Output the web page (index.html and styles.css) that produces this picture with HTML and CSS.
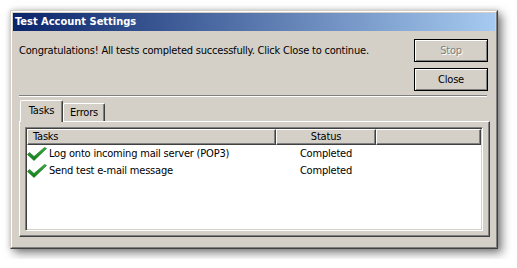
FILE: index.html
```html
<!DOCTYPE html>
<html>
<head>
<meta charset="utf-8">
<link rel="stylesheet" href="styles.css">
</head>
<body>
<div class="window">
  <div class="frame">
    <div class="titlebar">Test Account Settings</div>
    <div class="content">
      <div class="top">
        <div class="msg">Congratulations! All tests completed successfully. Click Close to continue.</div>
        <div class="buttons">
          <div class="btn disabled">Stop</div>
          <div class="btn">Close</div>
        </div>
      </div>
      <div class="sep"></div>
      <div class="tabs">
        <div class="tab active">Tasks</div>
        <div class="tab errors">Errors</div>
      </div>
      <div class="panel">
        <div class="list">
          <div class="header">
            <div class="hcell c1">Tasks</div>
            <div class="hcell c2">Status</div>
            <div class="hcell c3"></div>
          </div>
          <div class="row">
            <div class="cell c1"><svg class="check" width="20" height="14" viewBox="0 0 20 14"><defs><linearGradient id="g" x1="0" y1="0" x2="0" y2="1"><stop offset="0" stop-color="#3cb043"/><stop offset="1" stop-color="#0f7a16"/></linearGradient></defs><polygon points="0.5,7.5 2.5,5.5 7,9.5 17.5,0.5 19.5,1.5 7,13.5" fill="url(#g)" stroke="#0b6a12" stroke-width="0.6"/></svg>Log onto incoming mail server (POP3)</div>
            <div class="cell c2">Completed</div>
          </div>
          <div class="row">
            <div class="cell c1"><svg class="check" width="20" height="14" viewBox="0 0 20 14"><polygon points="0.5,7.5 2.5,5.5 7,9.5 17.5,0.5 19.5,1.5 7,13.5" fill="url(#g)" stroke="#0b6a12" stroke-width="0.6"/></svg>Send test e-mail message</div>
            <div class="cell c2">Completed</div>
          </div>
        </div>
      </div>
    </div>
  </div>
</div>
</body>
</html>
```
FILE: styles.css
```css
* { box-sizing: border-box; }
html, body { margin: 0; padding: 0; background: #fff; }
body {
  padding: 10px;
  font-family: "DejaVu Sans Condensed", "DejaVu Sans", sans-serif;
  font-size: 11px;
  letter-spacing: -0.2px;
  color: #000;
}
.window {
  width: 488px;
  height: 239px;
  background: #D4D0C8;
  border: 1px solid;
  border-color: #D4D0C8 #404040 #404040 #D4D0C8;
  box-shadow: 4px 4px 9px rgba(0,0,0,.5), 0 0 5px rgba(0,0,0,.15);
}
.frame {
  height: 100%;
  border: 1px solid;
  border-color: #fff #808080 #808080 #fff;
  display: flex;
  flex-direction: column;
}
.titlebar {
  margin: 1px 1px 0 1px;
  height: 18px;
  line-height: 18px;
  padding-left: 2px;
  color: #fff;
  font-weight: bold;
  letter-spacing: 0;
  background: linear-gradient(to right, #0A246A, #A6CAF0);
}
.content {
  padding: 0 7px;
}
.top {
  display: flex;
  justify-content: space-between;
  padding-top: 8px;
  padding-right: 1px;
}
.msg {
  padding-top: 5px;
  line-height: 13px;
}
.buttons {
  display: flex;
  flex-direction: column;
  gap: 6px;
}
.btn {
  width: 74px;
  height: 23px;
  line-height: 21px;
  text-align: center;
  border: 1px solid #000;
  box-shadow: inset 1px 1px #fff, inset -1px -1px #808080;
  background: #D4D0C8;
}
.btn.disabled {
  color: #808080;
  text-shadow: 1px 1px #fff;
}
.sep {
  margin-top: 4px;
  height: 2px;
  border-top: 1px solid #808080;
  border-bottom: 1px solid #fff;
  margin-right: 2px;
}
.tabs {
  margin-top: 3px;
  height: 21px;
  display: flex;
  align-items: flex-end;
  padding-left: 1px;
}
.tab {
  height: 18px;
  line-height: 17px;
  text-align: center;
  border-top: 1px solid #fff;
  border-left: 1px solid #fff;
  border-right: 1px solid #404040;
  border-radius: 2px 2px 0 0;
  box-shadow: inset -1px 0 #808080;
  background: #D4D0C8;
}
.tab.errors { width: 42px; }
.tab.active {
  width: 43px;
  height: 22px;
  margin-bottom: -1px;
  line-height: 19px;
  position: relative;
  z-index: 1;
}
.panel {
  width: 471px;
  height: 116px;
  border: 1px solid;
  border-color: #fff #404040 #404040 #fff;
  box-shadow: inset -1px -1px #808080;
  padding: 5px 0 0 5px;
}
.list {
  width: 458px;
  height: 104px;
  background: #fff;
  border: 1px solid;
  border-color: #808080 #fff #fff #808080;
  box-shadow: inset 1px 1px #404040, inset -1px -1px #D4D0C8;
  padding: 1px;
}
.header {
  display: flex;
  height: 16px;
}
.hcell {
  height: 16px;
  line-height: 14px;
  background: #D4D0C8;
  border: 1px solid;
  border-color: #fff #404040 #404040 #fff;
  box-shadow: inset -1px -1px #808080;
  padding-left: 5px;
}
.hcell.c1 { width: 249px; }
.hcell.c2 { width: 100px; text-align: center; padding-left: 0; }
.hcell.c3 { flex: 1; }
.row {
  display: flex;
  height: 17px;
  align-items: center;
}
.cell.c1 {
  width: 249px;
  display: flex;
  align-items: center;
  gap: 2px;
}
.cell.c2 {
  width: 100px;
  text-align: center;
}
.check { flex: none; }
```
